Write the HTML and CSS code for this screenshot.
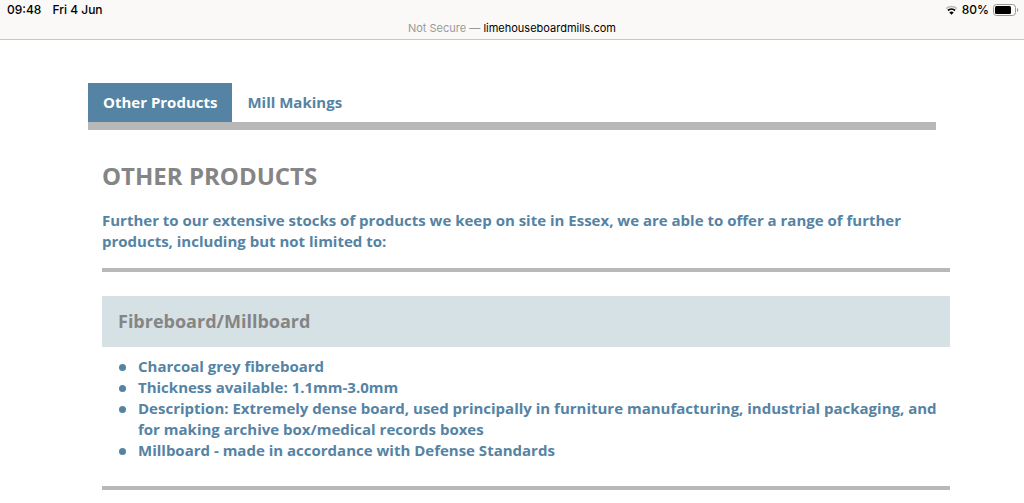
FILE: index.html
```html
<!DOCTYPE html>
<html lang="en">

<head>
    <meta charset="UTF-8">
    <meta name="viewport" content="width=device-width, initial-scale=1.0">
    <title>Other Products</title>
    <link rel="stylesheet" href="styles.css">
</head>

<body>
    <header class="browser">
        <div class="status">
            <div class="status_left">
                <span>09:48</span>
                <span>Fri 4 Jun</span>
            </div>
            <div class="status_right">
                <svg class="wifi" width="13" height="10" viewBox="0 0 12 10">
                    <path d="M0.7 3.6a7.5 7.5 0 0 1 10.6 0" fill="none" stroke="#bbb" stroke-width="1.5" />
                    <path d="M2.5 5.5a5 5 0 0 1 7 0" fill="none" stroke="#000" stroke-width="1.8" />
                    <path d="M6 9.8L3.8 7.6a3 3 0 0 1 4.4 0z" />
                </svg>
                <span>80%</span>
                <svg class="battery" width="26" height="12" viewBox="0 0 26 12">
                    <rect x="0.5" y="0.5" width="22" height="11" rx="3" fill="none" stroke="#999" />
                    <rect x="2" y="2" width="16" height="8" rx="1.5" />
                    <path d="M24 4a2.2 2.2 0 0 1 0 4z" fill="#999" />
                </svg>
            </div>
        </div>
        <div class="address">Not Secure — <span class="domain">limehouseboardmills.com</span></div>
    </header>
    <main class="page">
        <nav class="tabs">
            <a class="tab active" href="#other">Other Products</a>
            <a class="tab" href="#makings">Mill Makings</a>
        </nav>
        <section class="content" id="other">
            <h1>OTHER PRODUCTS</h1>
            <p>Further to our extensive stocks of products we keep on site in Essex, we are able to offer a range of further products, including but not limited to:</p>
            <hr>
            <h2>Fibreboard/Millboard</h2>
            <ul>
                <li>Charcoal grey fibreboard</li>
                <li>Thickness available: 1.1mm-3.0mm</li>
                <li>Description: Extremely dense board, used principally in furniture manufacturing, industrial packaging, and for making archive box/medical records boxes</li>
                <li>Millboard - made in accordance with Defense Standards</li>
            </ul>
            <hr>
        </section>
    </main>
</body>

</html>
```
FILE: styles.css
```css
* {
    box-sizing: border-box;
}

body {
    margin: 0;
    background: #fff;
    color: #5583a4;
    font-family: 'Open Sans', sans-serif;
    font-size: 15px;
    font-weight: 700;
    line-height: 21px;
}

.browser {
    background: #fbf9f7;
    border-bottom: 1px solid #c8c6c5;
    color: #000;
    font-family: Inter, sans-serif;
    font-size: 11px;
    font-weight: 400;
    padding-bottom: 3px;
}

.status {
    display: flex;
    justify-content: space-between;
    height: 20px;
    line-height: 20px;
    font-size: 12px;
    font-weight: 500;
    padding: 0 5px 0 7px;
}

.status_left,
.status_right {
    display: flex;
    align-items: center;
}

.status_left {
    gap: 11px;
}

.status_right {
    gap: 4px;
}

.address {
    text-align: center;
    line-height: 16px;
    color: #999;
}

.domain {
    color: #000;
}

.page {
    padding: 43px 88px 0;
}

.tabs {
    display: flex;
    border-bottom: 8px solid #b8b8b8;
}

.tab {
    padding: 9px 15px;
    color: #5583a4;
    text-decoration: none;
}

.tab.active {
    background: #5583a4;
    color: #fff;
}

/* same width as the tabs, shifted right */
.content {
    margin: 0 -14px 0 14px;
}

h1 {
    margin: 30px 0 18px;
    color: #858585;
    font-size: 24px;
    line-height: 32px;
}

p {
    margin: 0;
    padding-right: 14px;
}

hr {
    margin: 16px 0 24px;
    border: 0;
    border-top: 4px solid #b8b8b8;
}

h2 {
    margin: 0;
    padding: 13px 16px;
    background: #d6e1e6;
    color: #858585;
    font-size: 18px;
    line-height: 25px;
}

ul {
    margin: 9px 0 25px;
    padding-left: 36px;
    list-style: none;
}

li::before {
    content: '';
    float: left;
    width: 7px;
    height: 7px;
    margin: 8px 0 0 -19px;
    border-radius: 50%;
    background: #5583a4;
}
```
